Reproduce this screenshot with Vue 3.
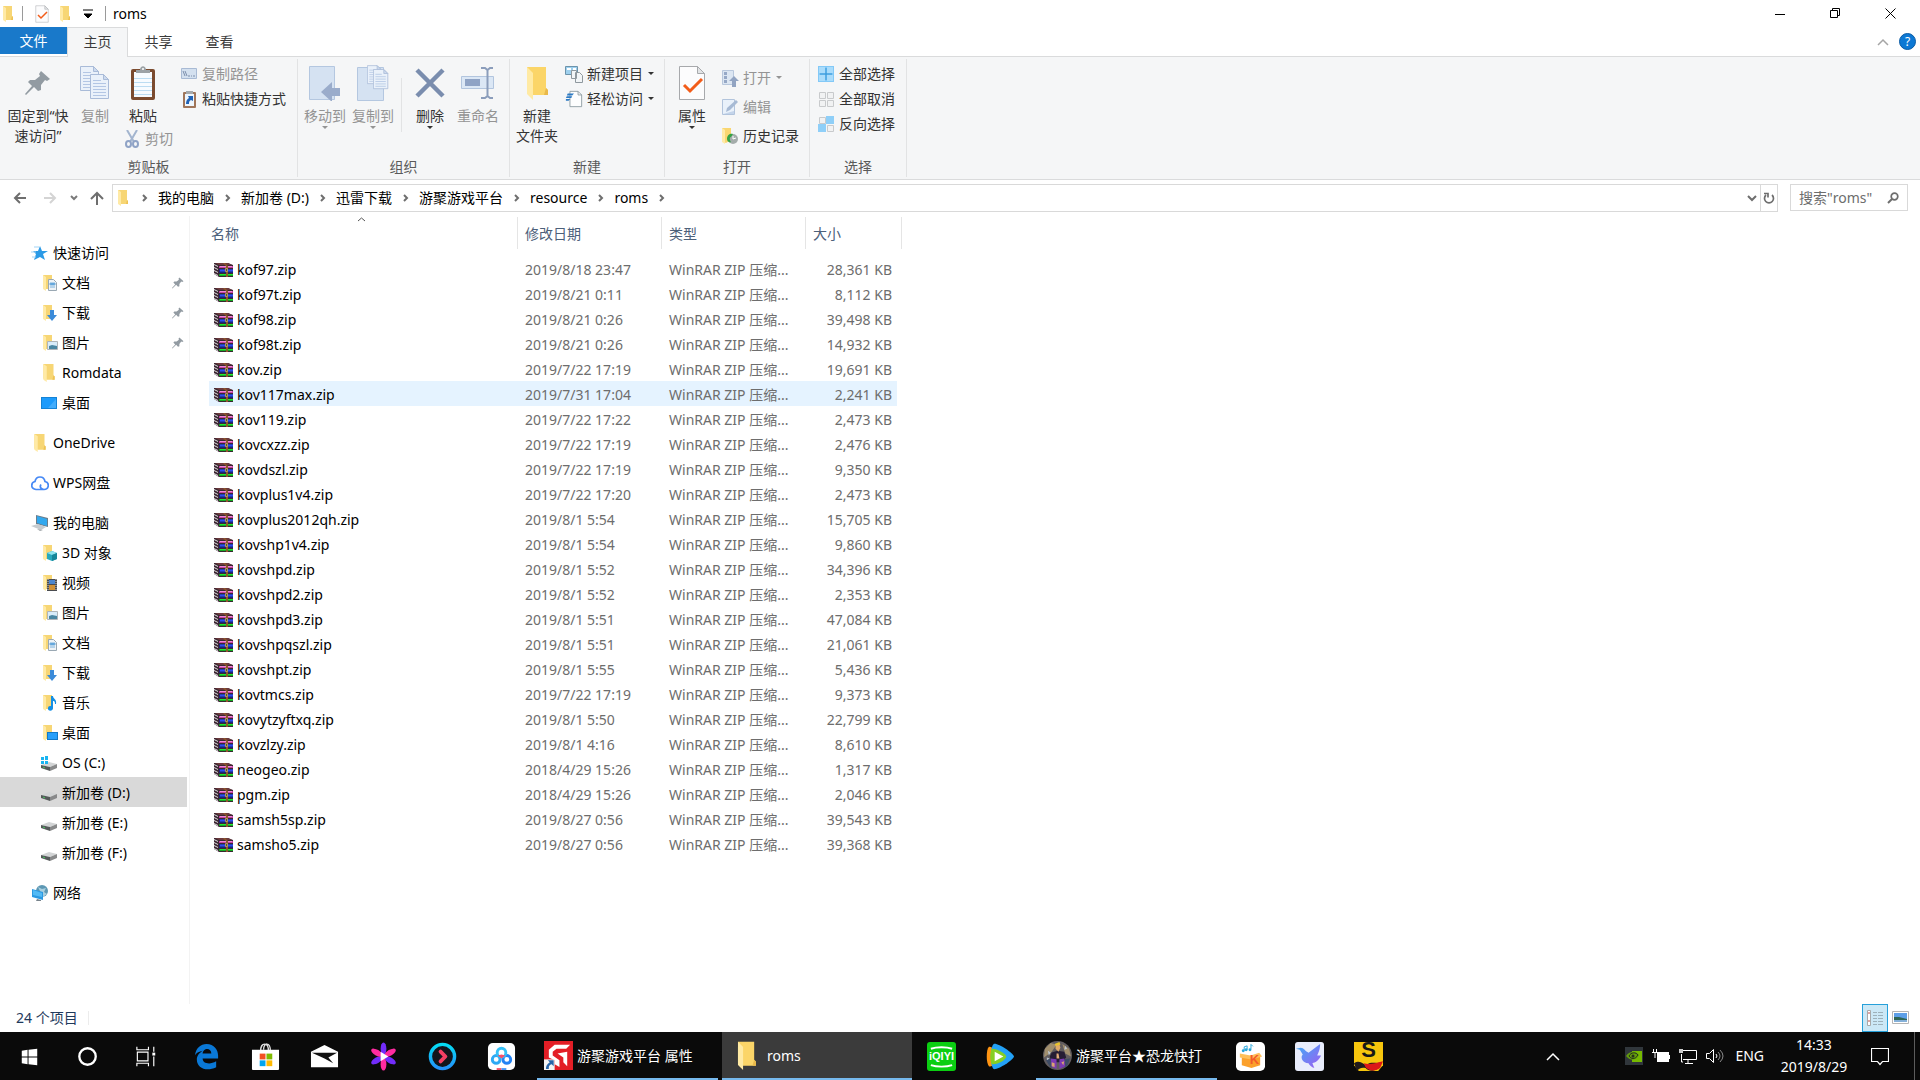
<template>
  <div class="desktop">
    <!-- Icon symbols -->
    <svg class="sprite" aria-hidden="true">
      <symbol id="folder" viewBox="0 0 16 16">
        <path d="M3 0h9v10l1 1v3H6L3 13z" fill="#f7d675" />
        <path d="M3 0l3 2v14l-3-2z" fill="#ffeaa6" />
        <path d="M12 10l1 1v3h-2z" fill="#eec255" />
      </symbol>
      <symbol id="checkdoc" viewBox="0 0 28 36">
        <path d="M1.500 1.500h18l7 7v26h-25z" fill="#fcfcfd" stroke="#a7a9ac" />
        <path d="M19.500 1.500v7h7z" fill="#e2e4e6" stroke="#a7a9ac" />
        <path d="M6 20l6 6 12-12" fill="none" stroke="#f25c19" stroke-width="3" />
      </symbol>
      <symbol id="pin" viewBox="0 0 26 26">
        <path d="M16 1l9 8-3 2-2-1-4 5 0 5-3 1-4-4-8 8-1-1 7-8-4-4 2-2h5l5-4-1-2z" fill="#929ba2" />
      </symbol>
      <symbol id="page" viewBox="0 0 20 26">
        <path d="M.5.5h13l5 5v19H.5z" fill="#eaf1fa" stroke="#a9bbd8" />
        <path d="M13.500.5v5h5z" fill="#cddaee" stroke="#a9bbd8" />
        <path d="M3 6.500h8M3 9.500h13M3 12.500h13M3 15.500h13M3 18.500h13M3 21.500h13" stroke="#b3c6e4" />
      </symbol>
      <symbol id="copy" viewBox="0 0 30 35">
        <use href="#page" x="0" y="0" width="20" height="26" />
        <use href="#page" x="10" y="8" width="20" height="26" />
      </symbol>
      <symbol id="paste" viewBox="0 0 26 35">
        <rect x="1" y="3" width="24" height="31" rx="2" fill="#7b4b2f" />
        <path d="M4 6h18v25H4z" fill="#f7fbff" />
        <path d="M4 12.500h18M4 16.500h18M4 20.500h18M4 24.500h18M4 28.500h18" stroke="#bcdcf2" />
        <path d="M6 7V4h4c0-5 6-5 6 0h4v3z" fill="#9ca2a6" />
        <circle cx="13" cy="3" r="1" fill="#fff" />
      </symbol>
      <symbol id="cut" viewBox="0 0 14 18">
        <path d="M2 0l7 12M12 0L5 12" stroke="#a3b5cf" stroke-width="2" fill="none" />
        <g fill="none" stroke="#8fa3c6" stroke-width="2">
          <ellipse cx="3.500" cy="14" rx="2.500" ry="3" />
          <ellipse cx="10.500" cy="14" rx="2.500" ry="3" />
        </g>
      </symbol>
      <symbol id="path" viewBox="0 0 18 18">
        <path d="M1.500 3.500h15v10h-15z" fill="#d3e0ef" stroke="#a8bad4" />
        <path d="M3 6l2 5M5 6l2 5 M8 11h2M11 11h1M13 11h2" stroke="#7d8fac" fill="none" />
      </symbol>
      <symbol id="shortcut" viewBox="0 0 18 18">
        <rect x="3" y="2" width="13" height="16" rx="1" fill="#a0765a" />
        <path d="M5 4h9v12H5z" fill="#eef6fd" />
        <path d="M6 1h7v3H6z" fill="#a5a9ac" />
        <path d="M8 6h5v5l-2-1c-2 1-2 2-2 4H6c0-3 1-5 3-6z" fill="#1f62b6" />
      </symbol>
      <symbol id="moveto" viewBox="0 0 32 35">
        <path d="M.5.500h25v33H.500z" fill="#d5e2f2" stroke="#b4c7e0" />
        <path d="M23 16v6h8v8h-8v6L12 26z" fill="#9aaccb" />
      </symbol>
      <symbol id="copyto" viewBox="0 0 32 36">
        <path d="M.5 2.500h26v33H.500z" fill="#d5e2f2" stroke="#b4c7e0" />
        <use href="#page" x="10" y="0" width="15" height="20" />
        <use href="#page" x="16" y="4" width="16" height="21" />
      </symbol>
      <symbol id="delete" viewBox="0 0 32 32">
        <path d="M3 3l26 26M29 3L3 29" stroke="#7a8dae" stroke-width="4.500" />
      </symbol>
      <symbol id="rename" viewBox="0 0 34 32">
        <path d="M.5 9.500h32v12H.500z" fill="#dbe7f5" stroke="#b2c5de" />
        <path d="M4 12h15v7H4z" fill="#8fa3c5" />
        <path d="M20 1h4l2.500 2L29 1h3M26.500 3v26M20 31h4l2.500-2 2.500 2h3" fill="none" stroke="#8b9dbb" stroke-width="2" />
      </symbol>
      <symbol id="bigfolder" viewBox="0 0 24 34">
        <path d="M2 1h19v21l2 2v5H8l-6-4z" fill="#fbd568" />
        <path d="M2 1l6 6v27l-6-6z" fill="#ffeaa4" />
        <path d="M21 22l2 2v5h-4z" fill="#e9b94b" />
      </symbol>
      <symbol id="newitem" viewBox="0 0 18 18">
        <path d="M.5 1.500h12v8H.500z" fill="#9ed0ee" stroke="#6c93ab" />
        <path d="M2 3h4v2H2zM8 3h3v2H8z" fill="#fff" />
        <path d="M6.500 5.500h5v8h-5zM10.500 7.500h4l3 3v7h-7z" fill="#f2f5f7" stroke="#8f989e" />
      </symbol>
      <symbol id="easy" viewBox="0 0 18 20">
        <path d="M4.500 1.500h9l4 4v13h-13z" fill="#fdfefe" stroke="#8c9ba2" />
        <path d="M13.500 1.500v4h4" fill="none" stroke="#8c9ba2" />
        <path d="M2 4h7l-2 2H1zM1 7h6l-1 2H0zM0 10h5l-2 2H0z" fill="#2e7bc4" />
      </symbol>
      <symbol id="open" viewBox="0 0 18 18">
        <path d="M1.500 1.500h11v14h-11z" fill="#dce6f2" stroke="#b8c7dc" />
        <path d="M3 3h3v3H3zM3 7h3v3H3zM3 11h3v3H3z" fill="#96a8c6" />
        <path d="M13 7l5 5h-3v6h-4v-6H8z" fill="#92a4c2" />
      </symbol>
      <symbol id="edit" viewBox="0 0 18 18">
        <path d="M1.500 1.500h12v15h-12z" fill="#e9f1fa" stroke="#b2c4dc" />
        <path d="M5 14l1-4L15 2l2 2-8 8z" fill="#a7bad4" />
        <path d="M2 16l11-3v3z" fill="#c3d4ea" />
      </symbol>
      <symbol id="history" viewBox="0 0 18 18">
        <path d="M1 1h9v12l-5 3-4-2z" fill="#f9d671" />
        <path d="M1 1l3 2v14l-3-2z" fill="#ffeaa6" />
        <circle cx="12" cy="12" r="5" fill="#a4acab" />
        <path d="M12 9v3l3-1" fill="none" stroke="#fff" />
        <path d="M6 12c0-5 4-6 6-5l-2 3c-2 0-1 4 0 5-2 1-4-1-4-3z" fill="#34a345" />
      </symbol>
      <symbol id="selall" viewBox="0 0 18 18">
        <path d="M1 1h16v16H1z" fill="#83c9f7" />
        <path d="M2 2h6v6H2zM10 2h6v6h-6zM2 10h6v6H2zM10 10h6v6h-6z" fill="#aadcfb" />
        <path d="M9 3v12M3 9h12" stroke="#2f93d6" stroke-width="1" />
      </symbol>
      <symbol id="selnone" viewBox="0 0 18 18">
        <path d="M2.500 2.500h6v6h-6zM10.500 2.500h6v6h-6zM2.500 10.500h6v6h-6zM10.500 10.500h6v6h-6z" fill="#f1f2f3" stroke="#c8cacc" />
      </symbol>
      <symbol id="selinv" viewBox="0 0 18 18">
        <path d="M2.500 2.500h6v6h-6zM10.500 10.500h6v6h-6z" fill="#f1f2f3" stroke="#c8cacc" />
        <path d="M9 1h8v8H9zM1 9h8v8H1z" fill="#8fcff8" />
      </symbol>
      <symbol id="star" viewBox="0 0 18 18">
        <path d="M9 2l2 5h6l-5 3 2 6-5-3-6 3 2-6-3-3h5z" fill="#2b9ae6" />
        <path d="M3 3h5M0 8h5M1 13h4" stroke="#a3d4f5" />
      </symbol>
      <symbol id="doc" viewBox="0 0 18 18">
        <use href="#folder" x="0" y="1" width="16" height="16" />
        <path d="M8.500 5.500h5l3 3v8h-8z" fill="#eef3f7" stroke="#9aa8b3" />
        <path d="M10 9h5v2h-5zM10 13h5" fill="#4f9bd9" stroke="#7ab2de" />
      </symbol>
      <symbol id="down" viewBox="0 0 18 18">
        <use href="#folder" x="0" y="1" width="16" height="16" />
        <path d="M10 6h4v5h3l-5 6-5-6h3z" fill="#3b8bd9" />
      </symbol>
      <symbol id="pic" viewBox="0 0 18 18">
        <use href="#folder" x="0" y="1" width="16" height="16" />
        <path d="M7.500 7.500h10v8h-10z" fill="#d8ecfa" stroke="#b0b5b9" />
        <path d="M9 12l3-1 5 1v3H9z" fill="#4a87a3" />
      </symbol>
      <symbol id="screen" viewBox="0 0 18 18">
        <path d="M1 3h16v12H1z" fill="#1583d6" />
        <path d="M2 4h14v10H2z" fill="#1d9bfb" />
        <path d="M8 14l8-9v9z" fill="#43adfc" />
      </symbol>
      <symbol id="cloud" viewBox="0 0 18 18">
        <path d="M13 15.500h-8c-6-1-5-7-1-8 1-6 9-6 10 0 5 1 4 8-1 8-2 0-5-2-3-5" fill="none" stroke="#4689f5" stroke-width="1.700" />
      </symbol>
      <symbol id="pc" viewBox="0 0 18 18">
        <path d="M5 1l12 3v9L5 10z" fill="#6b7d8b" />
        <path d="M6 2l10 3v7L6 9z" fill="#32a8ee" />
        <path d="M0 12l7-2 8 3-5 3z" fill="#c6cbcf" />
        <path d="M6 15l6 1-3 1z" fill="#9ea4a8" />
      </symbol>
      <symbol id="cube" viewBox="0 0 18 18">
        <use href="#folder" x="0" y="1" width="16" height="16" />
        <path d="M7 9l5-2 5 2v6l-5 2-5-2z" fill="#28a9bd" />
        <path d="M7 9l5-2 5 2-5 2z" fill="#8fe3ee" />
        <path d="M12 11l5-2v6l-5 2z" fill="#158699" />
      </symbol>
      <symbol id="video" viewBox="0 0 18 18">
        <use href="#folder" x="0" y="1" width="16" height="16" />
        <path d="M7 5h10v12H7z" fill="#4a4c50" />
        <path d="M9 6h6v4H9z" fill="#4b86cf" />
        <path d="M9 11h6v5H9z" fill="#d19136" />
        <path d="M8 5v12M16 5v12" stroke="#ccc" stroke-dasharray="1 1" />
      </symbol>
      <symbol id="music" viewBox="0 0 18 18">
        <use href="#folder" x="0" y="1" width="16" height="16" />
        <path d="M11 2h2c0 3 4 3 3 8l-1 0c0-3-1-3-2-3v7c0 4-6 3-5 0 0-2 2-2 3-2z" fill="#148fe5" />
      </symbol>
      <symbol id="deskfolder" viewBox="0 0 18 18">
        <use href="#folder" x="0" y="1" width="16" height="16" />
        <path d="M7 8h11v8H7z" fill="#1279c8" />
        <path d="M8 9h9v6H8z" fill="#279ffa" />
      </symbol>
      <symbol id="drive" viewBox="0 0 18 18">
        <path d="M1 11l8-3 8 2-7 3z" fill="#d2d4d5" />
        <path d="M1 11l9 2v4l-9-3z" fill="#55595a" />
        <path d="M10 13l7-3v4l-7 3z" fill="#88898a" />
        <path d="M3 13l2 1" stroke="#47c95f" />
      </symbol>
      <symbol id="osdrive" viewBox="0 0 18 18">
        <use href="#drive" width="18" height="18" />
        <path d="M1 3h3v3H1zM5 2h3v4H5zM1 7h3v3H1zM5 7h3v3H5z" fill="#19b4f1" />
      </symbol>
      <symbol id="network" viewBox="0 0 18 18">
        <circle cx="11" cy="7" r="6" fill="#5d98b4" />
        <path d="M7 3l4 2 4-1-2 4 3 2-4 3z" fill="#a9cfdf" />
        <path d="M1 5l11 3v8L1 13z" fill="#2b99e2" />
        <path d="M2 6l9 3v4L2 11z" fill="#52baf5" />
        <path d="M6 15l4 1v1H5z" fill="#77828a" />
      </symbol>
      <symbol id="rar" viewBox="0 0 20 16">
        <path d="M0 1h14l5 2v12H5l-5-3z" fill="#3b2632" />
        <path d="M1 1h13l4 2H5z" fill="#6d3a3d" />
        <path d="M5 4h14v2H5z" fill="#c440a1" />
        <path d="M6 4.500h12" stroke="#ec8bd5" />
        <path d="M5 7h14v4H5z" fill="#18247d" />
        <path d="M6 8.500h13" stroke="#2d50ee" stroke-width="2" />
        <path d="M5 12h14v2H5z" fill="#16a823" />
        <path d="M6 12.500h13" stroke="#25e834" />
        <path d="M0 2.500l4 2M0 5.500l4 2M0 8.500l4 2M0 11.500l4 2" stroke="#dedede" />
        <path d="M9 1h2l3 3v11h-2V4z" fill="#8f5a2b" />
        <path d="M11.500 6.500h2v3h-2z" fill="#4c4940" stroke="#b4975a" />
      </symbol>
      <symbol id="win" viewBox="0 0 30 30">
        <path d="M7 9l6-1v7H7zM14 8l9-1v8h-9zM7 16h6v7l-6-1zM14 16h9v8l-9-1z" fill="#fff" />
      </symbol>
      <symbol id="cortana" viewBox="0 0 30 30">
        <circle cx="14" cy="15" r="8.500" fill="none" stroke="#fff" stroke-width="2.400" />
      </symbol>
      <symbol id="taskview" viewBox="0 0 30 30">
        <path d="M4 5v3h12V5M4 25v-3h12v3M4.500 10.500h11v9h-11zM21.500 5v5M21.500 15v10" fill="none" stroke="#fff" stroke-width="1.200" />
        <path d="M20 11h3v3h-3z" fill="#fff" />
      </symbol>
      <symbol id="edge" viewBox="0 0 30 30">
        <path d="M3 14C4 6 9 2 15 2c8 0 12 6 12 12v3H11c0 5 7 7 14 3v6c-10 5-20 1-20-8 0-4 3-7 6-9-5 1-7 3-8 5zM11 12h9c0-7-9-6-9 0z" fill="#0a78d6" />
      </symbol>
      <symbol id="store" viewBox="0 0 30 30">
        <path d="M10 9C10 0 18 0 18 9M13 8c0-8 7-8 7 1" fill="none" stroke="#ddd" stroke-width="1.400" />
        <path d="M1 8h28v20c0 1-1 1-1 1H2c-1 0-1-1-1-1z" fill="#fff" />
        <path d="M9 12h6v6H9z" fill="#f25022" />
        <path d="M16 12h6v6h-6z" fill="#7fba00" />
        <path d="M9 19h6v6H9z" fill="#00a4ef" />
        <path d="M16 19h6v6h-6z" fill="#ffb900" />
      </symbol>
      <symbol id="mail" viewBox="0 0 30 30">
        <path d="M15 3l14 7v16H1V10z" fill="#fff" />
        <path d="M2 11h26l-9 5 5 6-9-5z" fill="#111" />
      </symbol>
      <symbol id="flower" viewBox="0 0 30 30">
        <g fill="#722cfb">
          <ellipse cx="15" cy="7" rx="3" ry="6.500" />
          <ellipse cx="15" cy="7" rx="3" ry="6.500" transform="rotate(120 15 15)" />
          <ellipse cx="15" cy="7" rx="3" ry="6.500" transform="rotate(240 15 15)" />
        </g>
        <g fill="#ff2ba0">
          <ellipse cx="15" cy="7" rx="3" ry="6.500" transform="rotate(60 15 15)" />
          <ellipse cx="15" cy="7" rx="3" ry="6.500" transform="rotate(180 15 15)" />
          <ellipse cx="15" cy="7" rx="3" ry="6.500" transform="rotate(300 15 15)" />
        </g>
        <path d="M12 10l8 5-8 5z" fill="#fff" />
      </symbol>
      <symbol id="arrowring" viewBox="0 0 30 30">
        <linearGradient id="ringfill" x1="0" y1="0" x2="0" y2="1">
          <stop offset="0" stop-color="#05dcf4" />
          <stop offset="1" stop-color="#2492fa" />
        </linearGradient>
        <circle cx="15" cy="15" r="12.500" fill="#12151c" stroke="url(#ringfill)" stroke-width="3.500" />
        <path d="M13 10l5 5-5 5" fill="none" stroke="#f43f64" stroke-width="4" stroke-linecap="round" stroke-linejoin="round" />
      </symbol>
      <symbol id="netdisk" viewBox="0 0 30 30">
        <rect x="1" y="1" width="28" height="28" rx="5" fill="#fff" />
        <g fill="none" stroke-width="3">
          <circle cx="9.500" cy="18" r="4" stroke="#2daaf5" />
          <circle cx="20.500" cy="18" r="4" stroke="#2283f5" />
          <circle cx="15" cy="11" r="4.500" stroke="#36c1f7" />
        </g>
        <path d="M11 14l4-1 4 1-4 3z" fill="#f6506c" />
        <path d="M10 27h5v2h-5z" fill="#f64f66" />
        <path d="M15 27h5v2h-5z" fill="#4797f6" />
      </symbol>
      <symbol id="youju" viewBox="0 0 30 30">
        <path d="M0 0h30v30H0z" fill="#e31e26" />
        <path d="M11 4h16l-4 4H13l-4 3v4l7 5v7l-5-3v-4l-6-3V9z" fill="#fff" />
        <path d="M14 13l10-2v15l-4-4v-5z" fill="#fff" />
        <path d="M0 19h11v11H0z" fill="#f4f4f4" />
        <path d="M4 20h6v6l-2-2c-3 1-3 2-3 5H2c0-3 1-5 4-7z" fill="#2765a9" />
      </symbol>
      <symbol id="iqiyi" viewBox="0 0 30 30">
        <rect width="30" height="30" rx="3" fill="#0bce12" />
        <path d="M4 7c6-2 16-2 22 0M4 24c6 2 16 2 22 0" fill="none" stroke="#fff" stroke-width="2" />
      </symbol>
      <symbol id="player" viewBox="0 0 30 30">
        <path d="M3 5c3-1 10 6 10 10S6 27 3 25C0 22 0 8 3 5z" fill="#ff9412" />
        <path d="M8 2c3-2 20 9 21 13-1 4-17 14-21 13C4 25 4 5 8 2z" fill="#23a1f6" />
        <path d="M6 7c4-1 15 5 15 8s-9 9-15 8C4 20 4 10 6 7z" fill="#85cf25" />
        <path d="M9 10l9 5-9 5z" fill="#fff" />
      </symbol>
      <symbol id="avatar" viewBox="0 0 30 30">
        <circle cx="15" cy="15" r="15" fill="#615c5e" />
        <path d="M2 8l6-6 6 2-5 7-8 6zM20 3l7 5 2 8-6-3z" fill="#a18f6d" />
        <path d="M3 20l7-4 2 9-4 3zM20 19l8-1-3 8-6 2z" fill="#3e4c65" />
        <path d="M5 10l3 2-2 3zM23 5l2 3-3 1zM4 17l3 1-3 2z" fill="#bac3cc" />
        <path d="M9 12l6-2 7 1 2 6-5 5H9l-2-6z" fill="#261d34" />
        <path d="M13 4l4-1 1 4-2 4-3-3z" fill="#e0aa68" />
        <path d="M8 18l6 1 0 10-5-2zM17 19l5-1 1 8-6 3z" fill="#7c3ab2" />
        <path d="M14 13h2l1 5h-3z" fill="#e3ad79" />
        <path d="M12 3l5-2 1 3-5 1z" fill="#e9c42d" />
        <path d="M9 22l3 1v4l-3-1zM19 22l3-1-1 4z" fill="#d9a273" />
      </symbol>
      <symbol id="kbox" viewBox="0 0 30 30">
        <rect width="30" height="30" rx="5" fill="#fff" />
        <path d="M6 15h19v9l-9 3-10-3z" fill="#fba02b" />
        <path d="M4 12l11 2 9-3 3 4-11 3-12-2z" fill="#ffc05a" />
        <path d="M8.500 9V5l3-1v4M15.500 7V2.500l2 2" fill="none" stroke="#2aa7db" />
        <circle cx="7.500" cy="9" r="1.500" fill="#2aa7db" />
        <circle cx="10.500" cy="8" r="1.500" fill="#2aa7db" />
        <circle cx="14.500" cy="8" r="1.500" fill="#2aa7db" />
      </symbol>
      <symbol id="bird" viewBox="0 0 30 30">
        <linearGradient id="birdfill" x1="0" y1="0" x2="1" y2="1">
          <stop offset="0" stop-color="#3caef6" />
          <stop offset="1" stop-color="#a05bf2" />
        </linearGradient>
        <rect width="30" height="30" rx="3" fill="#e9edfc" />
        <path d="M1 7l5-1c3 0 5 4 8 5L26 2c0 6-2 9-3 12l4 0c-3 6-6 7-9 8l2 5c-3-1-5-3-6-5-6 0-9-6-6-9L5 8z" fill="url(#birdfill)" />
      </symbol>
      <symbol id="sogou" viewBox="0 0 30 30">
        <path d="M0 0h30v24l-5 6H5l-5-6z" fill="#f7c60d" />
        <path d="M0 22c8-5 10 4 14 1s10 0 15-2l-5 7c-5 3-9 2-12-1-4-1-6 0-9 3z" fill="#211a1b" />
        <path d="M10 22c6 2 11 0 20-2l-3 7c-5 4-11 3-15-1z" fill="#dc1718" />
      </symbol>
    </svg>

    <!-- Title bar -->
    <header class="titlebar">
      <svg class="icon16"><use href="#folder" /></svg>
      <span class="bar-sep"></span>
      <button class="qa-btn" aria-label="属性"><svg class="icon18"><use href="#checkdoc" /></svg></button>
      <button class="qa-btn" aria-label="新建文件夹"><svg class="icon16"><use href="#folder" /></svg></button>
      <button class="qa-btn" aria-label="自定义快速访问工具栏">
        <svg width="10" height="10"><path d="M0 1h10M1 5h8l-4 4z" stroke="#000" stroke-width="1" /></svg>
      </button>
      <span class="bar-sep"></span>
      <span class="title-text">roms</span>
      <div class="window-btns">
        <button aria-label="最小化"><svg width="11" height="11"><path d="M0 6.500h10" stroke="#000" /></svg></button>
        <button aria-label="还原">
          <svg width="11" height="11"><path d="M.5 2.500h7v7h-7zM2.500 2.500v-2h7v7h-2" fill="none" stroke="#000" /></svg>
        </button>
        <button aria-label="关闭"><svg width="11" height="11"><path d="M.5.500l10 10M10.500.5l-10 10" stroke="#000" /></svg></button>
      </div>
    </header>

    <!-- Ribbon tabs -->
    <nav class="tabs">
      <button class="tab tab-file">文件</button>
      <button class="tab tab-active">主页</button>
      <button class="tab">共享</button>
      <button class="tab">查看</button>
      <div class="tabs-right">
        <button aria-label="最小化功能区"><svg width="12" height="8"><path d="M1 7l5-5 5 5" fill="none" stroke="#a5a5a5" stroke-width="1.500" /></svg></button>
        <button class="help" aria-label="帮助">?</button>
      </div>
    </nav>

    <!-- Ribbon -->
    <section class="ribbon">
      <div class="group g-clip">
        <div class="group-body">
          <button class="big w-pin"><span class="big-icon"><svg width="26" height="26"><use href="#pin" /></svg></span>固定到“快<br>速访问”</button>
          <button class="big w-copy" disabled><span class="big-icon"><svg width="30" height="35"><use href="#copy" /></svg></span>复制</button>
          <div class="stack">
            <button class="big w-paste"><span class="big-icon"><svg width="26" height="35"><use href="#paste" /></svg></span>粘贴</button>
            <button class="small" disabled><svg width="14" height="18"><use href="#cut" /></svg>剪切</button>
          </div>
          <div class="col">
            <button class="small" disabled><svg class="icon18"><use href="#path" /></svg>复制路径</button>
            <button class="small"><svg class="icon18"><use href="#shortcut" /></svg>粘贴快捷方式</button>
          </div>
        </div>
        <div class="group-label">剪贴板</div>
      </div>

      <div class="group g-org">
        <div class="group-body">
          <button class="big" disabled><span class="big-icon"><svg width="32" height="35"><use href="#moveto" /></svg></span>移动到<i class="caret"></i></button>
          <button class="big" disabled><span class="big-icon"><svg width="32" height="36"><use href="#copyto" /></svg></span>复制到<i class="caret"></i></button>
          <span class="inner-sep"></span>
          <button class="big"><span class="big-icon"><svg width="32" height="32"><use href="#delete" /></svg></span>删除<i class="caret"></i></button>
          <button class="big" disabled><span class="big-icon"><svg width="34" height="32"><use href="#rename" /></svg></span>重命名</button>
        </div>
        <div class="group-label">组织</div>
      </div>

      <div class="group g-new">
        <div class="group-body">
          <button class="big"><span class="big-icon"><svg width="24" height="34"><use href="#bigfolder" /></svg></span>新建<br>文件夹</button>
          <div class="col">
            <button class="small"><svg class="icon18"><use href="#newitem" /></svg>新建项目<i class="caret"></i></button>
            <button class="small"><svg class="icon18"><use href="#easy" /></svg>轻松访问<i class="caret"></i></button>
          </div>
        </div>
        <div class="group-label">新建</div>
      </div>

      <div class="group g-open">
        <div class="group-body">
          <button class="big"><span class="big-icon"><svg width="28" height="36"><use href="#checkdoc" /></svg></span>属性<i class="caret"></i></button>
          <div class="col col-wide">
            <button class="small" disabled><svg class="icon18"><use href="#open" /></svg>打开<i class="caret"></i></button>
            <button class="small" disabled><svg class="icon18"><use href="#edit" /></svg>编辑</button>
            <button class="small"><svg class="icon18"><use href="#history" /></svg>历史记录</button>
          </div>
        </div>
        <div class="group-label">打开</div>
      </div>

      <div class="group g-select">
        <div class="group-body">
          <div class="col">
            <button class="small"><svg class="icon18"><use href="#selall" /></svg>全部选择</button>
            <button class="small"><svg class="icon18"><use href="#selnone" /></svg>全部取消</button>
            <button class="small"><svg class="icon18"><use href="#selinv" /></svg>反向选择</button>
          </div>
        </div>
        <div class="group-label">选择</div>
      </div>
    </section>

    <!-- Address bar -->
    <div class="address-row">
      <div class="nav-btns">
        <button aria-label="后退"><svg width="14" height="12"><path d="M13 6H2M7 1L2 6l5 5" fill="none" stroke="#6e6e6e" stroke-width="2" /></svg></button>
        <button aria-label="前进" disabled><svg width="14" height="12"><path d="M1 6h11M7 1l5 5-5 5" fill="none" stroke="#d4d4d4" stroke-width="2" /></svg></button>
        <button class="narrow" aria-label="最近浏览的位置"><svg width="8" height="6"><path d="M1 1l3 3 3-3" fill="none" stroke="#7a7a7a" stroke-width="2" /></svg></button>
        <button aria-label="上移"><svg width="14" height="15"><path d="M7 14V2M1 8l6-6 6 6" fill="none" stroke="#6e6e6e" stroke-width="2" /></svg></button>
      </div>
      <div class="address">
        <svg class="icon16"><use href="#folder" /></svg>
        <svg class="crumb-arrow"><path d="M12 11l3 3-3 3" /></svg>
        <template v-for="crumb in crumbs" :key="crumb">
          <a href="#" class="crumb">{{ crumb }}</a>
          <svg class="crumb-arrow"><path d="M12 11l3 3-3 3" /></svg>
        </template>
        <button class="addr-drop" aria-label="以前的位置"><svg width="10" height="7"><path d="M1 1l4 4 4-4" fill="none" stroke="#6e6e6e" stroke-width="2" /></svg></button>
        <button class="addr-refresh" aria-label="刷新">
          <svg width="12" height="12"><path d="M3 3a4.500 4.500 0 1 0 6 0M1 1.500h4v4" fill="none" stroke="#6e6e6e" stroke-width="1.700" /></svg>
        </button>
      </div>
      <div class="search">
        <input v-model="query" type="text" aria-label="搜索" placeholder="搜索&quot;roms&quot;">
        <svg width="12" height="12"><path d="M1 11l4-4" stroke="#6e6e6e" stroke-width="2" /><circle cx="7.500" cy="4.500" r="3.300" fill="none" stroke="#6e6e6e" stroke-width="1.700" /></svg>
      </div>
    </div>

    <!-- Content -->
    <main class="content">
      <aside class="sidebar">
        <ul v-for="(section, i) in sections" :key="i" class="tree">
          <li
            v-for="item in section"
            :key="item.name"
            class="node"
            :class="{ child: item.child, selected: item.selected }"
          >
            <svg class="icon18"><use :href="'#' + item.icon" /></svg>
            <span class="node-name">{{ item.name }}</span>
            <svg v-if="item.pinned" width="12" height="12"><use href="#pin" /></svg>
          </li>
        </ul>
      </aside>

      <section class="files">
        <table class="file-table">
          <thead>
            <tr>
              <th class="c-name">
                <div class="th-box">名称</div>
                <svg class="sort" width="9" height="5"><path d="M1 4l3.500-3L8 4" fill="none" stroke="#555" /></svg>
              </th>
              <th class="c-date"><div class="th-box">修改日期</div></th>
              <th class="c-type"><div class="th-box">类型</div></th>
              <th class="c-size"><div class="th-box">大小</div></th>
            </tr>
          </thead>
          <tbody>
            <tr v-for="file in files" :key="file[0]" :class="{ hover: file[0] === hovered }">
              <td><div class="file-name"><svg width="20" height="16"><use href="#rar" /></svg>{{ file[0] }}</div></td>
              <td class="muted">{{ file[1] }}</td>
              <td class="muted">WinRAR ZIP 压缩...</td>
              <td class="muted size">{{ file[2] }} KB</td>
            </tr>
          </tbody>
        </table>
      </section>
    </main>

    <!-- Status bar -->
    <footer class="status">
      <span class="count">{{ files.length }} 个项目</span>
      <div class="views">
        <button class="view view-on" aria-label="详细信息">
          <svg width="18" height="18">
            <path d="M1.500 1.500h3v15h-3z" fill="#fff" stroke="#a9a9a9" />
            <path d="M7 3.500h4M12 3.500h5M7 6.500h4M12 6.500h5M7 9.500h4M12 9.500h5M7 12.500h4M12 12.500h5M7 15.500h4M12 15.500h5" stroke="#9db1ba" />
            <path d="M2.500 4h1M2.500 12h1" stroke="#c0504d" stroke-width="2" />
          </svg>
        </button>
        <button class="view" aria-label="大图标">
          <svg width="18" height="14">
            <path d="M.5.500h16v12H.5z" fill="#fff" stroke="#b5b5b5" />
            <path d="M2 2h13v6H2z" fill="#5d9fe8" />
            <path d="M2 6l5 0 8 2v1H2z" fill="#2f6656" />
            <path d="M2 9h13v2H2z" fill="#84b0d8" />
          </svg>
        </button>
      </div>
    </footer>

    <!-- Taskbar -->
    <footer class="taskbar">
      <template v-for="task in tasks" :key="task.icon">
        <button v-if="task.label" class="task" :class="{ active: task.active }">
          <svg class="icon29"><use :href="'#' + task.icon" /></svg>
          <span>{{ task.label }}</span>
        </button>
        <button v-else class="task-icon" :aria-label="task.hint">
          <svg class="icon29"><use :href="'#' + task.icon" /></svg>
          <span v-if="task.mark" class="mark" :class="'mark-' + task.icon">{{ task.mark }}</span>
        </button>
      </template>

      <div class="tray">
        <button class="tray-up" aria-label="显示隐藏的图标"><svg width="14" height="9"><path d="M1 8l6-6 6 6" fill="none" stroke="#fff" stroke-width="1.500" /></svg></button>
        <svg width="18" height="18">
          <path d="M0 0h18v18H0z" fill="#30363b" />
          <path d="M7 4h10v11H7z" fill="#76b900" />
          <path d="M1 9c4-6 11-5 13-1-3 6-9 6-13 1z" fill="#639b0c" />
          <path d="M4 9c2-4 7-4 9-1-3 5-7 4-9 1z" fill="none" stroke="#26321b" />
          <circle cx="8" cy="9" r="1.500" fill="#26321b" />
        </svg>
        <svg width="18" height="18">
          <path d="M5 5h12v3h1v4h-1v3H5z" fill="#fff" />
          <path d="M1.500 2v3M4.500 2v3M0 5.500h6M3 6v5" stroke="#fff" fill="none" />
        </svg>
        <svg width="18" height="18">
          <path d="M4 3.500h13.500v9H4M9 13v3M6 16.500h8M2.500 7v8H4" stroke="#fff" fill="none" />
          <path d="M0 2h4v4H0z" fill="#ccc" />
        </svg>
        <svg width="18" height="18">
          <path d="M.5 6.500h3l4-4v13l-4-4h-3z" fill="none" stroke="#fff" />
          <path d="M10 7q2 2 0 4" fill="none" stroke="#fff" />
          <path d="M12 5q4 4 0 8M14 3q6 6 0 12" fill="none" stroke="#8a8a8a" />
        </svg>
        <span class="lang">ENG</span>
        <div class="clock"><div>14:33</div><div>2019/8/29</div></div>
        <button class="notify" aria-label="通知">
          <svg width="18" height="19"><path d="M.500 1.500h17v13h-6l-2.500 3-2.500-3H.500z" fill="none" stroke="#fff" stroke-width="1.200" /></svg>
        </button>
        <span class="show-desktop"></span>
      </div>
    </footer>
  </div>
</template>

<script setup>
import { ref } from 'vue'

const query = ref('')
const hovered = ref('kov117max.zip')

const crumbs = ['我的电脑', '新加卷 (D:)', '迅雷下载', '游聚游戏平台', 'resource', 'roms']

const sections = [
  [
    { name: '快速访问', icon: 'star' },
    { name: '文档', icon: 'doc', child: true, pinned: true },
    { name: '下载', icon: 'down', child: true, pinned: true },
    { name: '图片', icon: 'pic', child: true, pinned: true },
    { name: 'Romdata', icon: 'folder', child: true },
    { name: '桌面', icon: 'screen', child: true }
  ],
  [{ name: 'OneDrive', icon: 'folder' }],
  [{ name: 'WPS网盘', icon: 'cloud' }],
  [
    { name: '我的电脑', icon: 'pc' },
    { name: '3D 对象', icon: 'cube', child: true },
    { name: '视频', icon: 'video', child: true },
    { name: '图片', icon: 'pic', child: true },
    { name: '文档', icon: 'doc', child: true },
    { name: '下载', icon: 'down', child: true },
    { name: '音乐', icon: 'music', child: true },
    { name: '桌面', icon: 'deskfolder', child: true },
    { name: 'OS (C:)', icon: 'osdrive', child: true },
    { name: '新加卷 (D:)', icon: 'drive', child: true, selected: true },
    { name: '新加卷 (E:)', icon: 'drive', child: true },
    { name: '新加卷 (F:)', icon: 'drive', child: true }
  ],
  [{ name: '网络', icon: 'network' }]
]

// name, modified, size in KB
const files = [
  ['kof97.zip', '2019/8/18 23:47', '28,361'],
  ['kof97t.zip', '2019/8/21 0:11', '8,112'],
  ['kof98.zip', '2019/8/21 0:26', '39,498'],
  ['kof98t.zip', '2019/8/21 0:26', '14,932'],
  ['kov.zip', '2019/7/22 17:19', '19,691'],
  ['kov117max.zip', '2019/7/31 17:04', '2,241'],
  ['kov119.zip', '2019/7/22 17:22', '2,473'],
  ['kovcxzz.zip', '2019/7/22 17:19', '2,476'],
  ['kovdszl.zip', '2019/7/22 17:19', '9,350'],
  ['kovplus1v4.zip', '2019/7/22 17:20', '2,473'],
  ['kovplus2012qh.zip', '2019/8/1 5:54', '15,705'],
  ['kovshp1v4.zip', '2019/8/1 5:54', '9,860'],
  ['kovshpd.zip', '2019/8/1 5:52', '34,396'],
  ['kovshpd2.zip', '2019/8/1 5:52', '2,353'],
  ['kovshpd3.zip', '2019/8/1 5:51', '47,084'],
  ['kovshpqszl.zip', '2019/8/1 5:51', '21,061'],
  ['kovshpt.zip', '2019/8/1 5:55', '5,436'],
  ['kovtmcs.zip', '2019/7/22 17:19', '9,373'],
  ['kovytzyftxq.zip', '2019/8/1 5:50', '22,799'],
  ['kovzlzy.zip', '2019/8/1 4:16', '8,610'],
  ['neogeo.zip', '2018/4/29 15:26', '1,317'],
  ['pgm.zip', '2018/4/29 15:26', '2,046'],
  ['samsh5sp.zip', '2019/8/27 0:56', '39,543'],
  ['samsho5.zip', '2019/8/27 0:56', '39,368']
]

const tasks = [
  { icon: 'win', hint: '开始' },
  { icon: 'cortana', hint: 'Cortana' },
  { icon: 'taskview', hint: '任务视图' },
  { icon: 'edge', hint: 'Microsoft Edge' },
  { icon: 'store', hint: 'Microsoft Store' },
  { icon: 'mail', hint: '邮件' },
  { icon: 'flower', hint: '视频编辑' },
  { icon: 'arrowring', hint: '加速器' },
  { icon: 'netdisk', hint: '网盘' },
  { icon: 'youju', label: '游聚游戏平台 属性' },
  { icon: 'bigfolder', label: 'roms', active: true },
  { icon: 'iqiyi', hint: '爱奇艺', mark: 'iQIYI' },
  { icon: 'player', hint: '播放器' },
  { icon: 'avatar', label: '游聚平台★恐龙快打' },
  { icon: 'kbox', hint: '音乐盒', mark: 'K' },
  { icon: 'bird', hint: '迅雷' },
  { icon: 'sogou', hint: '搜狗', mark: 'S' }
]
</script>

<style>
body {
  background: #fff;
}
</style>

<style scoped>
.desktop {
  display: flex;
  flex-direction: column;
  min-height: 100vh;
  background: #fff;
  color: #000;
  font-family: "Noto Sans", "Noto Sans CJK SC", sans-serif;
  font-size: 14px;
  line-height: 20px;
}

.sprite {
  position: absolute;
  width: 0;
  height: 0;
}

svg {
  flex: none;
}

button {
  display: flex;
  align-items: center;
  justify-content: center;
  padding: 0;
  border: none;
  background: none;
  color: inherit;
  font: inherit;
}

.icon16 {
  width: 16px;
  height: 16px;
}

.icon18 {
  width: 18px;
  height: 18px;
}

.icon29 {
  width: 29px;
  height: 29px;
}

/* Title bar */
.titlebar {
  display: flex;
  align-items: center;
  height: 27px;
}

.bar-sep {
  width: 1px;
  height: 15px;
  margin: 0 7px 0 6px;
  background: #9a9a9a;
}

.qa-btn {
  width: 23px;
  height: 24px;
}

.title-text {
  flex: 1;
}

.window-btns {
  display: flex;
  padding-right: 2px;
}

.window-btns button {
  width: 55px;
  height: 24px;
}

/* Tabs */
.tabs {
  display: flex;
  height: 29px;
}

.tab {
  width: 61px;
  color: #3b3b3b;
}

.tab-file {
  width: 67px;
  height: 27px;
  background: #1979ca;
  color: #fff;
}

.tab-active {
  z-index: 1;
  box-sizing: border-box;
  height: 30px;
  padding-bottom: 2px;
  border: 1px solid #dadbdc;
  border-bottom: none;
  background: #f5f6f7;
}

.tabs-right {
  display: flex;
  align-items: center;
  gap: 10px;
  margin-left: auto;
  padding-right: 4px;
}

.help {
  width: 17px;
  height: 17px;
  border: 1px solid #0a5ba5;
  border-radius: 50%;
  box-sizing: border-box;
  background: #0c78d4;
  color: #fff;
  font-size: 12px;
}

/* Ribbon */
.ribbon {
  display: flex;
  height: 122px;
  border-top: 1px solid #dadbdc;
  border-bottom: 1px solid #dadbdc;
  background: #f5f6f7;
  color: #333;
}

.group {
  display: flex;
  flex-direction: column;
  box-sizing: border-box;
  margin: 2px 0;
  border-right: 1px solid #e2e3e4;
}

.g-clip {
  width: 298px;
}

.g-org {
  width: 212px;
}

.g-new {
  width: 155px;
}

.g-open {
  width: 145px;
}

.g-select {
  width: 97px;
}

.group-body {
  display: flex;
  flex: 1;
}

.group-label {
  height: 20px;
  color: #5a5a5a;
  text-align: center;
}

.big {
  flex-direction: column;
  justify-content: flex-start;
  width: 48px;
  padding-top: 5px;
  white-space: nowrap;
}

.big-icon {
  display: flex;
  align-items: center;
  justify-content: center;
  height: 38px;
  margin-bottom: 4px;
}

.w-pin {
  width: 76px;
}

.w-copy {
  width: 38px;
}

.w-paste {
  width: 42px;
}

.g-org .group-body,
.g-new .group-body,
.g-open .group-body {
  padding-left: 3px;
}

.g-select .group-body {
  padding-left: 7px;
}

button:disabled {
  color: #949494;
}

.inner-sep {
  width: 1px;
  height: 54px;
  margin: 19px 4px 0;
  background: #e2e3e4;
}

.stack {
  width: 58px;
  padding-left: 8px;
}

.stack .small {
  margin-left: 3px;
  gap: 6px;
}

.col {
  padding-top: 2px;
}

.small {
  gap: 4px;
  height: 25px;
  justify-content: flex-start;
  white-space: nowrap;
}

.g-new .col {
  padding-left: 4px;
}

.col-wide {
  padding: 4px 0 0 5px;
}

.col-wide .small {
  height: 29px;
}

.caret {
  border: 3px solid transparent;
  border-top-color: currentColor;
  border-bottom-width: 0;
}

.small .caret {
  margin-left: 1px;
}

/* Address bar */
.address-row {
  display: flex;
  gap: 12px;
  padding: 4px 12px 4px 0;
}

.nav-btns {
  display: flex;
  align-items: center;
  padding-left: 5px;
  margin-right: -12px;
}

.nav-btns button {
  width: 30px;
}

.nav-btns .narrow {
  width: 17px;
}

.address {
  display: flex;
  flex: 1;
  align-items: center;
  box-sizing: border-box;
  height: 28px;
  padding-left: 2px;
  border: 1px solid #d9d9d9;
}

.crumb {
  color: #000;
  text-decoration: none;
}

.crumb-arrow {
  width: 27px;
  height: 28px;
  fill: none;
  stroke: #6e6e6e;
  stroke-width: 2;
}

.addr-drop {
  width: 16px;
  margin-left: auto;
}

.addr-refresh {
  align-self: stretch;
  width: 17px;
  border-left: 1px solid #d9d9d9;
}

.search {
  display: flex;
  align-items: center;
  box-sizing: border-box;
  width: 118px;
  height: 27px;
  padding: 0 8px;
  border: 1px solid #d9d9d9;
}

.search input {
  flex: 1;
  min-width: 0;
  padding: 0;
  border: none;
  outline: none;
  font: inherit;
}

.search input::placeholder {
  color: #6d6d6d;
  opacity: 1;
}

/* Content */
.content {
  display: flex;
  flex: 1;
}

.sidebar {
  display: flex;
  flex-direction: column;
  gap: 10px;
  width: 187px;
  padding: 21px 2px 0 0;
  border-right: 1px solid #f3f3f3;
}

.tree {
  margin: 0;
  padding: 0;
  list-style: none;
}

.node {
  display: flex;
  align-items: center;
  gap: 4px;
  box-sizing: border-box;
  height: 30px;
  padding: 1px 3px 0 31px;
}

.node.child {
  padding-left: 40px;
}

.node.selected {
  background: #d9d9d9;
}

.node-name {
  flex: 1;
}

.files {
  flex: 1;
  padding: 1px 0 0 19px;
}

.file-table {
  width: 693px;
  table-layout: fixed;
  border-spacing: 0;
}

th {
  position: relative;
  padding: 0 0 7px;
  font-weight: normal;
  text-align: left;
}

.th-box {
  box-sizing: border-box;
  height: 32px;
  padding-left: 7px;
  border-right: 1px solid #e5e5e5;
  color: #4c607a;
  line-height: 34px;
}

.c-name {
  width: 309px;
}

.c-name .th-box {
  padding-left: 2px;
}

.c-date,
.c-type {
  width: 144px;
}

.c-size {
  width: 96px;
}

.sort {
  position: absolute;
  top: 0;
  left: 148px;
}

td {
  box-sizing: border-box;
  height: 25px;
  padding: 2px 0 0 7px;
  white-space: nowrap;
}

td:first-child {
  padding-left: 5px;
}

.file-name {
  display: flex;
  align-items: center;
  gap: 3px;
}

.muted {
  color: #6d6d6d;
}

.size {
  padding-right: 5px;
  border-right: 5px solid transparent;
  background-clip: padding-box;
  text-align: right;
}

.hover td {
  background-color: #e5f3ff;
}

/* Status bar */
.status {
  display: flex;
  align-items: center;
  height: 28px;
  padding: 0 6px 0 16px;
}

.count {
  padding-right: 10px;
  border-right: 1px solid #ececec;
  color: #1e395b;
  line-height: 14px;
}

.views {
  display: flex;
  align-items: center;
  margin-left: auto;
}

.view {
  box-sizing: border-box;
  width: 26px;
  height: 28px;
}

.view-on {
  border: 1px solid #26a0da;
  background: #cbe8f6;
}

/* Taskbar */
.taskbar {
  display: flex;
  height: 48px;
  background: #0a0a0a;
  color: #fff;
}

.task-icon {
  position: relative;
  width: 59px;
}

/* Lettering on top of an app logo */
.mark {
  position: absolute;
  top: 14px;
  left: 0;
  width: 59px;
  font-family: "Liberation Sans", sans-serif;
  font-size: 11px;
  font-weight: bold;
  text-align: center;
}

.mark-kbox {
  top: 18px;
  left: 4px;
  color: #f35c2b;
  font-size: 13px;
}

.mark-sogou {
  top: 8px;
  color: #171717;
  font-size: 22px;
}

.task {
  justify-content: flex-start;
  gap: 4px;
  box-sizing: border-box;
  width: 181px;
  margin: 0 4px 0 6px;
  padding: 1px 0 0 7px;
  border-bottom: 2px solid #76b9ed;
  white-space: nowrap;
}

.task.active {
  gap: 6px;
  width: 190px;
  margin: 0;
  padding-left: 10px;
  background: #3b3b3b;
}

.tray {
  display: flex;
  align-items: center;
  gap: 9px;
  margin-left: auto;
}

.tray-up {
  width: 14px;
  margin-right: 56px;
}

.lang {
  margin: 0 6px 0 2px;
}

.clock {
  width: 70px;
  line-height: 22px;
  text-align: center;
}

.notify {
  margin: 0 16px 0 13px;
}

.show-desktop {
  align-self: stretch;
  width: 5px;
  border-left: 1px solid #5c5c5c;
}
</style>
